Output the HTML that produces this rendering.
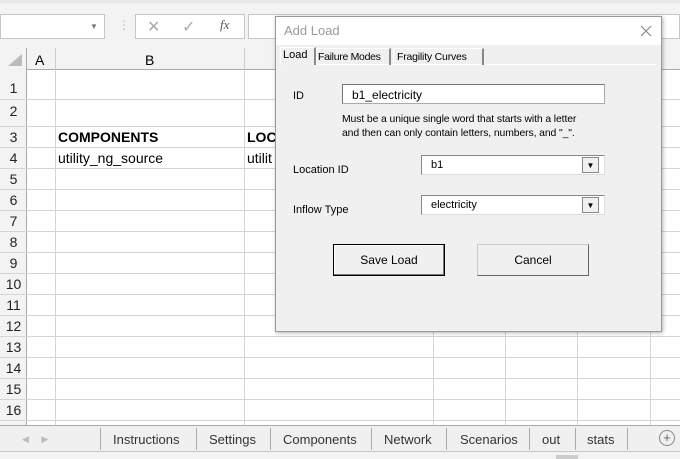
<!DOCTYPE html><html><head><style>
*{margin:0;padding:0;box-sizing:border-box}
body{width:680px;height:459px;overflow:hidden;background:#fff;font-family:"Liberation Sans",Arial,sans-serif;position:relative}
.a{position:absolute}
.hl{position:absolute;left:0;width:680px;height:1px;background:#d4d4d4}
.vl{position:absolute;top:70px;height:356px;width:1px;background:#d4d4d4}
.rn{position:absolute;left:0;width:27px;text-align:center;font-size:14px;color:#222}
.tab{position:absolute;top:432px;font-size:13px;color:#333}
.sep{position:absolute;top:428px;width:1px;height:22px;background:#aaa}
</style></head><body>
<div class="a" style="left:0;top:0;width:680px;height:48px;background:#f3f3f3"></div>
<div class="a" style="left:0;top:0;width:680px;height:3px;background:#e8e8e8"></div>
<div class="a" style="left:0;top:14px;width:105px;height:25px;background:#fff;border:1px solid #c6c6c6"></div>
<div class="a" style="left:90px;top:22px;font-size:8px;color:#777">▼</div>
<div class="a" style="left:118px;top:18px;color:#bbb;font-size:12px">⋮</div>
<div class="a" style="left:135px;top:14px;width:110px;height:25px;background:#fff;border:1px solid #c6c6c6"></div>
<div class="a" style="left:147px;top:17px;color:#aaa;font-size:16px">✕</div>
<div class="a" style="left:182px;top:17px;color:#aaa;font-size:16px">✓</div>
<div class="a" style="left:220px;top:17px;color:#555;font-size:13px;font-style:italic;font-family:'Liberation Serif',serif">fx</div>
<div class="a" style="left:248px;top:14px;width:432px;height:25px;background:#fff;border:1px solid #c6c6c6"></div>
<div class="a" style="left:0;top:48px;width:680px;height:22px;background:#f3f3f3;border-bottom:1px solid #ababab"></div>
<div class="a" style="left:0;top:48px;width:27px;height:378px;background:#f3f3f3;border-right:1px solid #ababab"></div>
<div class="a" style="left:8px;top:54px;width:0;height:0;border-left:14px solid transparent;border-bottom:12px solid #bbb"></div>
<div class="a" style="left:35px;top:52px;font-size:14px">A</div>
<div class="a" style="left:145px;top:52px;font-size:14px">B</div>
<div class="vl" style="left:55px"></div><div class="vl" style="left:244px"></div><div class="vl" style="left:433px"></div><div class="vl" style="left:505px"></div><div class="vl" style="left:577px"></div><div class="vl" style="left:650px"></div>
<div class="a" style="left:55px;top:48px;width:1px;height:22px;background:#ccc"></div>
<div class="a" style="left:244px;top:48px;width:1px;height:22px;background:#ccc"></div>
<div class="hl" style="top:99px"></div><div class="hl" style="top:126px"></div><div class="hl" style="top:147px"></div><div class="hl" style="top:168px"></div><div class="hl" style="top:189px"></div><div class="hl" style="top:210px"></div><div class="hl" style="top:231px"></div><div class="hl" style="top:252px"></div><div class="hl" style="top:273px"></div><div class="hl" style="top:294px"></div><div class="hl" style="top:315px"></div><div class="hl" style="top:336px"></div><div class="hl" style="top:357px"></div><div class="hl" style="top:378px"></div><div class="hl" style="top:399px"></div><div class="hl" style="top:420px"></div>
<div class="rn" style="top:80px">1</div><div class="rn" style="top:103px">2</div><div class="rn" style="top:129px">3</div><div class="rn" style="top:150px">4</div><div class="rn" style="top:171px">5</div><div class="rn" style="top:192px">6</div><div class="rn" style="top:213px">7</div><div class="rn" style="top:234px">8</div><div class="rn" style="top:255px">9</div><div class="rn" style="top:276px">10</div><div class="rn" style="top:297px">11</div><div class="rn" style="top:318px">12</div><div class="rn" style="top:339px">13</div><div class="rn" style="top:360px">14</div><div class="rn" style="top:381px">15</div><div class="rn" style="top:402px">16</div>
<div class="a" style="left:58px;top:129px;font-size:14px;font-weight:bold">COMPONENTS</div>
<div class="a" style="left:247px;top:129px;font-size:14px;font-weight:bold">LOC</div>
<div class="a" style="left:58px;top:150px;font-size:14px">utility_ng_source</div>
<div class="a" style="left:247px;top:150px;font-size:14px">utilit</div>
<div class="a" style="left:0;top:425px;width:680px;height:27px;background:#f0f0f0;border-top:1px solid #ababab;border-bottom:1px solid #c6c6c6"></div>
<div class="a" style="left:22px;top:434px;font-size:9px;color:#bbb">◀&nbsp;&nbsp;&nbsp;&nbsp;&nbsp;▶</div>
<div class="sep" style="left:100px"></div><div class="tab" style="left:113px">Instructions</div>
<div class="sep" style="left:196px"></div><div class="tab" style="left:209px">Settings</div>
<div class="sep" style="left:270px"></div><div class="tab" style="left:283px">Components</div>
<div class="sep" style="left:371px"></div><div class="tab" style="left:384px">Network</div>
<div class="sep" style="left:446px"></div><div class="tab" style="left:460px">Scenarios</div>
<div class="sep" style="left:529px"></div><div class="tab" style="left:542px">out</div>
<div class="sep" style="left:575px"></div><div class="tab" style="left:587px">stats</div>
<div class="sep" style="left:627px"></div>
<div class="a" style="left:659px;top:430px;width:16px;height:16px;border:1px solid #888;border-radius:50%;font-size:13px;line-height:13px;text-align:center;color:#666">+</div>
<div class="a" style="left:0;top:452px;width:680px;height:7px;background:#f3f3f3"></div>
<div class="a" style="left:556px;top:455px;width:22px;height:4px;background:#ccc"></div>
<div class="a" style="left:275px;top:16px;width:387px;height:316px;background:#f0f0f0;border:1px solid #999;box-shadow:1px 1px 4px rgba(0,0,0,.3)">
 <div class="a" style="left:0;top:0;width:385px;height:28px;background:#fff"></div>
 <div class="a" style="left:8px;top:6px;font-size:13px;color:#999">Add Load</div>
 <svg class="a" style="left:364px;top:8px" width="12" height="12"><path d="M1 1L11 11M11 1L1 11" stroke="#888" stroke-width="1.2"/></svg>
 <div class="a" style="left:5px;top:47px;width:375px;height:1px;background:#fff"></div>
 <div class="a" style="left:4px;top:30px;width:36px;height:18px;background:#f0f0f0;border:1px solid #fff;border-bottom:none;border-right:2px solid #888"></div>
 <div class="a" style="left:7px;top:32px;font-size:11px">Load</div>
 <div class="a" style="left:40px;top:31px;width:75px;height:17px;border-left:1px solid #fff;border-right:2px solid #888;border-top:1px solid #fff"></div>
 <div class="a" style="left:42px;top:34px;font-size:10.5px;letter-spacing:-0.3px">Failure Modes</div>
 <div class="a" style="left:117px;top:31px;width:91px;height:17px;border-left:1px solid #fff;border-right:2px solid #888;border-top:1px solid #fff"></div>
 <div class="a" style="left:121px;top:34px;font-size:10.5px;letter-spacing:-0.2px">Fragility Curves</div>
 <div class="a" style="left:17px;top:73px;font-size:11px">ID</div>
 <div class="a" style="left:66px;top:67px;width:263px;height:20px;background:#fff;border:1px solid #aaa;border-top-color:#777;border-left-color:#777"></div>
 <div class="a" style="left:76px;top:71px;font-size:12px">b1_electricity</div>
 <div class="a" style="left:66px;top:96px;font-size:10.4px;line-height:14px;letter-spacing:-0.1px">Must be a unique single word that starts with a letter<br>and then can only contain letters, numbers, and "_".</div>
 <div class="a" style="left:17px;top:147px;font-size:11px">Location ID</div>
 <div class="a" style="left:145px;top:138px;width:184px;height:20px;background:#fff;border:1px solid #888;border-bottom-color:#ddd;border-right-color:#ddd"></div>
 <div class="a" style="left:155px;top:142px;font-size:11px">b1</div>
 <div class="a" style="left:306px;top:140px;width:17px;height:16px;background:#f0f0f0;border:1px solid #888;font-size:8px;text-align:center;line-height:15px">▼</div>
 <div class="a" style="left:17px;top:187px;font-size:11px">Inflow Type</div>
 <div class="a" style="left:145px;top:178px;width:184px;height:20px;background:#fff;border:1px solid #888;border-bottom-color:#ddd;border-right-color:#ddd"></div>
 <div class="a" style="left:155px;top:182px;font-size:11px">electricity</div>
 <div class="a" style="left:306px;top:180px;width:17px;height:16px;background:#f0f0f0;border:1px solid #888;font-size:8px;text-align:center;line-height:15px">▼</div>
 <div class="a" style="left:57px;top:227px;width:112px;height:32px;border:1px solid #000;box-shadow:inset -1px -1px #777,inset 1px 1px #fff;font-size:12px;text-align:center;line-height:30px">Save Load</div>
 <div class="a" style="left:201px;top:227px;width:112px;height:32px;border:1px solid #ccc;border-right-color:#666;border-bottom-color:#666;font-size:12px;text-align:center;line-height:30px">Cancel</div>
</div>
</body></html>
